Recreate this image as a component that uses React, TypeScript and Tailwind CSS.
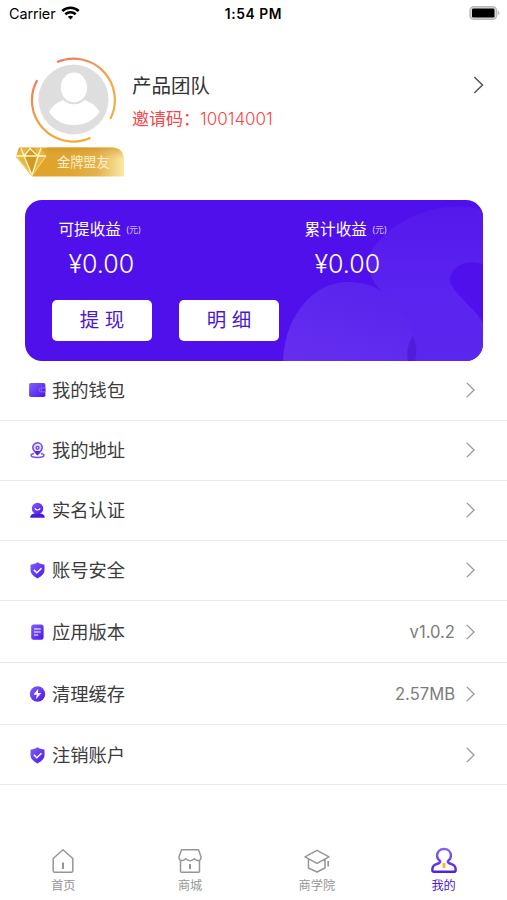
import type { ReactNode } from 'react';

const Chevron = ({ className }: { className: string }) => (
  <svg className={className} viewBox="0 0 10 18" fill="none" stroke="currentColor" strokeWidth="1.5">
    <path d="M.8 1 9 9 .8 17" />
  </svg>
);

const Defs = () => (
  <svg className="absolute size-0" aria-hidden="true">
    <defs>
      <linearGradient id="violet" x1="0" y1="0" x2="1" y2="1">
        <stop offset="0" stopColor="#8260f8" />
        <stop offset="1" stopColor="#4a16ea" />
      </linearGradient>
      <linearGradient id="ring" x1="0" y1="0" x2="0" y2="1">
        <stop offset="0" stopColor="#ee7d61" />
        <stop offset="1" stopColor="#f1ac35" />
      </linearGradient>
      <linearGradient id="ring2" x1="0" y1="0" x2="1" y2="1">
        <stop offset="0" stopColor="#ee7d61" />
        <stop offset="0.7" stopColor="#f1ac45" />
      </linearGradient>
      <linearGradient id="person" x1="0" y1="0" x2="0" y2="1">
        <stop offset="0" stopColor="#8464ef" />
        <stop offset="1" stopColor="#5420dc" />
      </linearGradient>
    </defs>
  </svg>
);

const Icon = ({ children }: { children: ReactNode }) => (
  <svg className="size-[18px] shrink-0" viewBox="0 0 18 18" fill="none">{children}</svg>
);

const Shield = () => (
  <Icon>
    <path d="M9.500 1.300 11.700 2.600 16.500 3.700v5.400c0 3.700-2.900 6.300-7 8.300-4.100-2-7-4.600-7-8.300V3.700l4.800-1.100z" fill="url(#violet)" />
    <path d="m5.900 8.900 2.900 2.800 4.700-4.500" stroke="#fff" strokeWidth="1.500" />
  </Icon>
);

const Wallet = () => (
  <Icon>
    <rect x="1.100" y="2" width="16.300" height="14" rx="1.800" fill="url(#violet)" />
    <path d="M17.300 7h-4.500a1.500 1.500 0 0 0-1.500 1.500v.8a1.500 1.500 0 0 0 1.500 1.500h4.500" fill="#5528e7" stroke="#9879fa" strokeWidth=".8" />
    <circle cx="13.300" cy="8.900" r=".6" fill="#b7a2ff" />
  </Icon>
);

const Pin = () => (
  <Icon>
    <g transform="translate(.5)">
      <path d="M5.600 12.400c-2 .4-3.100 1.100-3.100 1.900 0 1.300 2.900 2.100 6.500 2.100s6.500-.8 6.500-2.100c0-.8-1.100-1.500-3.100-1.900" stroke="#7650ee" strokeWidth="1.500" />
      <path d="M9 13.600C6.600 11.400 4.300 9.200 4.300 6.500a4.700 4.700 0 0 1 9.400 0c0 2.700-2.300 4.900-4.700 7.100z" fill="#e5dcff" stroke="#6b42ea" strokeWidth="1.500" />
      <path d="m6.300 10 2.700 3.900 2.700-3.900z" fill="#5422df" />
      <circle cx="9" cy="6.800" r="2.100" fill="#6b42ea" />
      <circle cx="9" cy="6.800" r=".8" fill="#fff" />
    </g>
  </Icon>
);

const Identity = () => (
  <Icon>
    <g transform="translate(.5)">
      <path d="M1.700 16.800c0-2.500 1.500-3.700 4.600-4.200V11h5.400v1.600c3.100.5 4.600 1.700 4.600 4.200z" fill="#4c19df" />
      <circle cx="9" cy="7.500" r="5.700" fill="url(#violet)" />
      <path d="M6.300 7.400c1.300 2.200 4.100 2.200 5.400 0" stroke="#fff" strokeWidth="1.100" />
    </g>
  </Icon>
);

const Document = () => (
  <Icon>
    <rect x="3.200" y="1.500" width="12.400" height="15.200" rx="2.500" fill="url(#violet)" />
    <path d="M6 6h6.800M6 9h6.800M6 12h4.200" stroke="#fff" strokeWidth="1.200" />
  </Icon>
);

const Bolt = () => (
  <Icon>
    <circle cx="9.500" cy="9" r="7.700" fill="url(#violet)" />
    <path d="M10.200 3.800 5.400 9.700h3.400l-.8 4.500 5.300-6.100H10z" fill="#fff" />
  </Icon>
);

const rows: { label: string; icon: ReactNode; height: string; value?: string }[] = [
  { label: '我的钱包', icon: <Wallet />, height: 'h-[60px] pb-px' },
  { label: '我的地址', icon: <Pin />, height: 'h-[60px] pb-px' },
  { label: '实名认证', icon: <Identity />, height: 'h-[60px] pb-px' },
  { label: '账号安全', icon: <Shield />, height: 'h-[60px] pb-px' },
  { label: '应用版本', icon: <Document />, height: 'h-[62px]', value: 'v1.0.2' },
  { label: '清理缓存', icon: <Bolt />, height: 'h-[62px] pt-px', value: '2.57MB' },
  { label: '注销账户', icon: <Shield />, height: 'h-[60px] pt-px' },
];

const StatusBar = () => (
  <div className="grid h-7 grid-cols-[1fr_auto_1fr] items-center pl-[9px] pr-[7px] text-black">
    <div className="flex items-center gap-[6px]">
      <span className="text-[14.400px] leading-5 tracking-[-0.1px]">Carrier</span>
      <svg className="-mt-0.5 h-[14px] w-[19px]" viewBox="0 0 19 14" fill="none" stroke="currentColor" strokeWidth="2.600">
        <path d="M1.300 5C5.900.7 13.100.7 17.700 5M4.300 8.200c3-2.700 7.400-2.700 10.400 0" />
        <path d="M6.800 10.800c1.500-1.500 3.900-1.500 5.400 0l-2.700 2.800z" fill="currentColor" stroke="none" />
      </svg>
    </div>
    <div className="-ml-[2px] text-[13.800px] font-semibold leading-5 tracking-[0.6px]">1:54 PM</div>
    <svg className="-mt-0.5 h-[14px] w-[31px] justify-self-end" viewBox="0 0 31 14">
      <rect x="1" y=".7" width="26.600" height="12.600" rx="3.800" fill="#ddd" stroke="#b9b9b9" strokeWidth="1.400" />
      <rect x="3" y="2.500" width="22.500" height="9" rx="1.300" fill="#000" />
      <path d="M28.900 4.800c2 .6 2 3.800 0 4.400z" fill="#bbb" />
    </svg>
  </div>
);

const Avatar = () => (
  <svg className="size-[86px]" viewBox="0 0 86 86" fill="none">
    <circle cx="43.500" cy="42.500" r="35" fill="#dedede" />
    <ellipse cx="44" cy="30.500" rx="13.200" ry="15" fill="#fff" />
    <path d="M19 55c3.500-6 8-10 15-12 6.500 5 13.500 5 20 0 7 2 12.500 6 15.500 12C63 64 54.500 68 44 68s-19-4-25-13z" fill="#fff" />
    <path d="M34 43c6.500 4.600 13.500 4.600 20 0" stroke="#dedede" strokeWidth="1.600" />
    <path d="M27 5.100A41.300 41.300 0 0 1 80.200 62" stroke="url(#ring2)" strokeWidth="2.200" />
    <path d="M7.200 23.100A41.300 41.300 0 0 0 60.500 80.800" stroke="url(#ring)" strokeWidth="2.200" />
  </svg>
);

const Badge = () => (
  <div className="ml-[15px] grid h-[30px] w-[110px] *:col-start-1 *:row-start-1">
    <svg className="size-full" viewBox="0 0 110 30">
      <defs>
        <linearGradient id="gold">
          <stop offset="0" stopColor="#e0a226" />
          <stop offset=".5" stopColor="#e0a632" />
          <stop offset=".75" stopColor="#e3b24c" />
          <stop offset="1" stopColor="#fae9a4" />
        </linearGradient>
        <linearGradient id="shine" x1="0" y1="0" x2="0" y2="1">
          <stop offset="0" stopColor="#cf9224" stopOpacity=".65" />
          <stop offset="1" stopColor="#e0a83a" stopOpacity="0" />
        </linearGradient>
      </defs>
      <path d="M4 .5h93c8 0 12 5 12 12v17H17L1 10z" fill="url(#gold)" />
      <path d="M32 .5h65c8 0 12 5 12 12H32z" fill="url(#shine)" />
      <path d="M6 1.200h20L31.200 9 17 28.500 1 9z" fill="#e9b640" />
      <path d="M13 1.200h6L23 9l-6 19-8-19z" fill="#d39b22" />
      <path d="M1 9h30M6 1.200 9 9l8 19.500L23 9l3-7.800M9 9l6-7.500L23 9" fill="none" stroke="#fff6c8" strokeWidth="1.400" />
      <path d="M31.200 9 17 28.500 1 9" fill="none" stroke="#f8dc87" />
    </svg>
    <span className="pl-[42px] pt-[5px] text-[13.200px] leading-5 text-[#fff0cf]">金牌盟友</span>
  </div>
);

const Earning = ({ label }: { label: string }) => (
  <div>
    <div className="flex items-center text-[15.600px] leading-5">
      <span>{label}</span>
      <span className="ml-[5px] text-[9px] font-light">(元)</span>
    </div>
    <div className="mt-2 pl-[10px] text-[25px] font-light leading-8">¥0.00</div>
  </div>
);

const EarningsCard = () => (
  <section className="relative ml-[25px] h-[161px] w-[458px] overflow-hidden rounded-[17px] bg-[#5010eb] text-white">
    <svg className="absolute inset-0 size-full" viewBox="0 0 458 161">
      <defs>
        <linearGradient id="petal" x1="0" y1="0" x2="0" y2="1">
          <stop offset="0" stopColor="#5518ec" />
          <stop offset=".6" stopColor="#5b24ef" />
          <stop offset="1" stopColor="#5b26ee" />
        </linearGradient>
        <linearGradient id="petal2" x1="0" y1="1" x2=".5" y2="0">
          <stop offset="0" stopColor="#652eef" />
          <stop offset="1" stopColor="#5b24ee" />
        </linearGradient>
      </defs>
      <path d="M458 10C418-2 366 18 346 52c-6 14-1 27 10 39l25 70h77v-38c-4-7-8-12-14-17-10-12-21-20-19-29 4-12 17-18 33-13z" fill="url(#petal)" />
      <path d="M258 161c2-48 32-78 63-79 13 0 25 2 35 9 22 14 35 36 35 70z" fill="url(#petal2)" />
      <path d="M383 161c-2-9 0-18 5-25 4 8 4 17 2 25z" fill="#531bdc" />
    </svg>
    <div className="relative">
      <div className="grid grid-cols-[246px_1fr] pl-[33.500px] pt-5">
        <Earning label="可提收益" />
        <Earning label="累计收益" />
      </div>
      <div className="flex gap-[27px] pl-[27px] pt-5 text-[19.500px] text-[#4b18ce]">
        <button className="h-[41px] w-[100px] rounded-[5px] bg-white">提 现</button>
        <button className="h-[41px] w-[100px] rounded-[5px] bg-white">明 细</button>
      </div>
    </div>
  </section>
);

const tabs: { label: string; active?: boolean; icon: ReactNode }[] = [
  {
    label: '首页',
    icon: (
      <>
        <path d="M4.200 11.500 14 2.800l9.800 8.700v12.300c0 1-.5 1.500-1.500 1.500H5.700c-1 0-1.500-.5-1.500-1.500z" />
        <path d="M14 15.500V22" strokeWidth="2" />
      </>
    ),
  },
  {
    label: '商城',
    icon: (
      <>
        <path d="M5.500 2.800h17l2.500 7c.5 2-1 3.800-3 3.800-1.700 0-2.700-.7-3.700-2-2 2.700-6.600 2.700-8.600 0-1 1.300-2 2-3.700 2-2 0-3.500-1.800-3-3.800zM4.500 13.300v11c0 .7.400 1 1 1h17c.6 0 1-.3 1-1v-11" />
        <path d="M14 17v5" strokeWidth="2" />
      </>
    ),
  },
  {
    label: '商学院',
    icon: (
      <>
        <path d="m2 9.800 12-6.500 12 6.500-12 6.500zM5.500 12v9l8.500 4 8-4v-9" />
        <path d="M25.200 14v5.500" strokeWidth="1.700" />
      </>
    ),
  },
  {
    label: '我的',
    active: true,
    icon: (
      <>
        <path d="M10.200 14.200C7.900 12.700 7.100 10.900 7.100 8.600c0-4 2.800-6.600 6.900-6.600s6.900 2.600 6.900 6.600c0 2.300-.8 4.100-3.100 5.600-.5 1.400 1.200 2 4.400 3.100 2.800 1 3.500 2.300 3.500 5.600 0 1.300-.6 1.900-1.900 1.900H4.200c-1.300 0-1.900-.6-1.900-1.900 0-3.300.7-4.600 3.500-5.600 3.200-1.100 4.900-1.700 4.400-3.100z" stroke="url(#person)" strokeWidth="2.400" />
        <path d="M14 16v5" stroke="#f0b544" strokeWidth="3" />
      </>
    ),
  },
];

export default function App() {
  return (
    <main className="relative flex h-[900px] w-[507px] flex-col overflow-hidden bg-white font-['Inter','Noto_Sans_CJK_SC',sans-serif]">
      <Defs />
      <StatusBar />
      <header className="flex h-[172px] pt-[29px]">
        <div className="flex w-[132px] shrink-0 flex-col">
          <div className="ml-[30px] h-[90px]"><Avatar /></div>
          <Badge />
        </div>
        <div className="flex flex-1 justify-between pr-[23px]">
          <div className="pt-[17px]">
            <h1 className="text-[19.500px] leading-6 text-[#333]">产品团队</h1>
            <p className="mt-[9px] text-[17px] leading-6 text-[#f84646]">邀请码：<span className="font-light">10014001</span></p>
          </div>
          <Chevron className="mt-[19px] h-[18px] w-[11px] text-[#555]" />
        </div>
      </header>
      <EarningsCard />
      <ul>
        {rows.map(({ label, icon, height, value }) => (
          <li key={label} className={`${height} flex items-center border-b border-[#e9e9e9] pl-[28px] pr-[31px]`}>
            {icon}
            <span className="ml-[6px] text-[18.300px] leading-6 text-[#3c3c3c]">{label}</span>
            <span className="ml-auto text-[16.600px] leading-6 text-[#7c7c7c]">{value}</span>
            <Chevron className="ml-[10px] h-4 w-[11px] text-[#999]" />
          </li>
        ))}
      </ul>
      <nav className="mt-auto grid h-[53px] grid-cols-4">
        {tabs.map(({ label, icon, active }) => (
          <a key={label} className={`flex flex-col items-center text-[12.200px] leading-4 ${active ? 'text-[#4f20d0]' : 'text-[#969696]'}`}>
            <svg className="h-[28px] w-7" viewBox="0 0 28 28" fill="none" stroke="currentColor" strokeWidth="1.500" strokeLinejoin="round">{icon}</svg>
            <span className="mt-[3px]">{label}</span>
          </a>
        ))}
      </nav>
    </main>
  );
}
